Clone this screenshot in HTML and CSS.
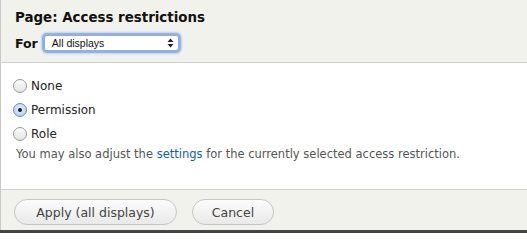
FILE: index.html
```html
<!DOCTYPE html>
<html>
<head>
<meta charset="utf-8">
<link rel="stylesheet" href="styles.css">
</head>
<body>
<div class="dialog">
  <div class="head">
    <h1 class="title">Page: Access restrictions</h1>
    <div class="for-row">
      <span class="for-label">For</span>
      <div class="select">
        <span class="select-text">All displays</span>
        <svg class="select-arrows" width="7" height="10" viewBox="0 0 7 10"><path d="M3.5 0.5 L6.5 4 L0.5 4 Z M0.5 6 L6.5 6 L3.5 9.5 Z" fill="#222"/></svg>
      </div>
    </div>
  </div>
  <div class="body">
    <label class="radio"><span class="dot"></span>None</label>
    <label class="radio"><span class="dot checked"></span>Permission</label>
    <label class="radio"><span class="dot"></span>Role</label>
    <p class="desc">You may also adjust the <a class="link">settings</a> for the currently selected access restriction.</p>
  </div>
  <div class="foot">
    <button class="btn btn-apply">Apply (all displays)</button>
    <button class="btn btn-cancel">Cancel</button>
  </div>
  <div class="strip"></div>
</div>
</body>
</html>
```
FILE: styles.css
```css
html, body {
  margin: 0;
  padding: 0;
  background: #fff;
}
body {
  width: 527px;
  height: 233px;
  overflow: hidden;
  font-family: "DejaVu Sans", "Liberation Sans", sans-serif;
  color: #333;
}
.dialog {
  display: flex;
  flex-direction: column;
  height: 233px;
  border-left: 1px solid #c8c8c8;
  box-sizing: border-box;
}
.head {
  background: #f2f2ed;
  height: 54px;
  flex: none;
  border-bottom: 1px solid #cfcfcf;
  padding: 8px 0 0 14px;
  box-sizing: content-box;
}
.title {
  margin: 0;
  font-size: 13.4px;
  font-weight: bold;
  color: #111;
  line-height: 18px;
  padding-top: 1px;
}
.for-row {
  display: flex;
  align-items: center;
  gap: 6px;
  margin-top: 8px;
}
.for-label {
  font-size: 12.5px;
  font-weight: bold;
  color: #111;
}
.select {
  width: 122px;
  height: 14px;
  background: #fff;
  border: 1px solid #9aa9c6;
  border-radius: 3px;
  box-shadow: 0 0 0 2px #8fb4ec, 0 0 2px 3px #b9d2f5;
  display: flex;
  align-items: center;
  justify-content: space-between;
  padding: 0 4px 0 7px;
  box-sizing: content-box;
}
.select-text {
  font-family: "Liberation Sans", sans-serif;
  font-size: 10.5px;
  color: #111;
}
.select-arrows {
  display: block;
}
.body {
  flex: 1;
  padding: 11px 0 0 12px;
  display: flex;
  flex-direction: column;
  font-size: 12px;
}
.radio {
  display: flex;
  align-items: center;
  gap: 4px;
  height: 24px;
  color: #222;
}
.dot {
  width: 12px;
  height: 12px;
  border-radius: 50%;
  border: 1px solid #9a9a9a;
  background: linear-gradient(#fcfcfc, #e4e4e4);
  box-sizing: content-box;
  display: flex;
  align-items: center;
  justify-content: center;
}
.dot.checked {
  border-color: #6e8bb8;
  background: radial-gradient(circle at 50% 40%, #e8f1fd, #a9c6ee);
}
.dot.checked::after {
  content: "";
  width: 4px;
  height: 4px;
  border-radius: 50%;
  background: #1a1a1a;
}
.desc {
  margin: 0 0 0 3px;
  font-size: 11.5px;
  color: #555;
  line-height: 16px;
}
.link {
  color: #0a63a8;
  text-decoration: none;
}
.foot {
  background: #f2f2ed;
  border-top: 1px solid #cfcfcf;
  height: 40px;
  flex: none;
  display: flex;
  align-items: center;
  gap: 15px;
  padding-left: 13px;
}
.btn {
  height: 26px;
  border: 1px solid #c6c6c6;
  border-radius: 13px;
  background: linear-gradient(#fcfcfc, #e9e9e9);
  font-family: "DejaVu Sans", sans-serif;
  font-size: 12.5px;
  color: #444;
  padding: 0;
  margin-top: 4px;
}
.btn-apply {
  width: 163px;
}
.btn-cancel {
  width: 82px;
}
.strip {
  height: 3px;
  flex: none;
  background: #454545;
  margin-left: -1px;
}
```
